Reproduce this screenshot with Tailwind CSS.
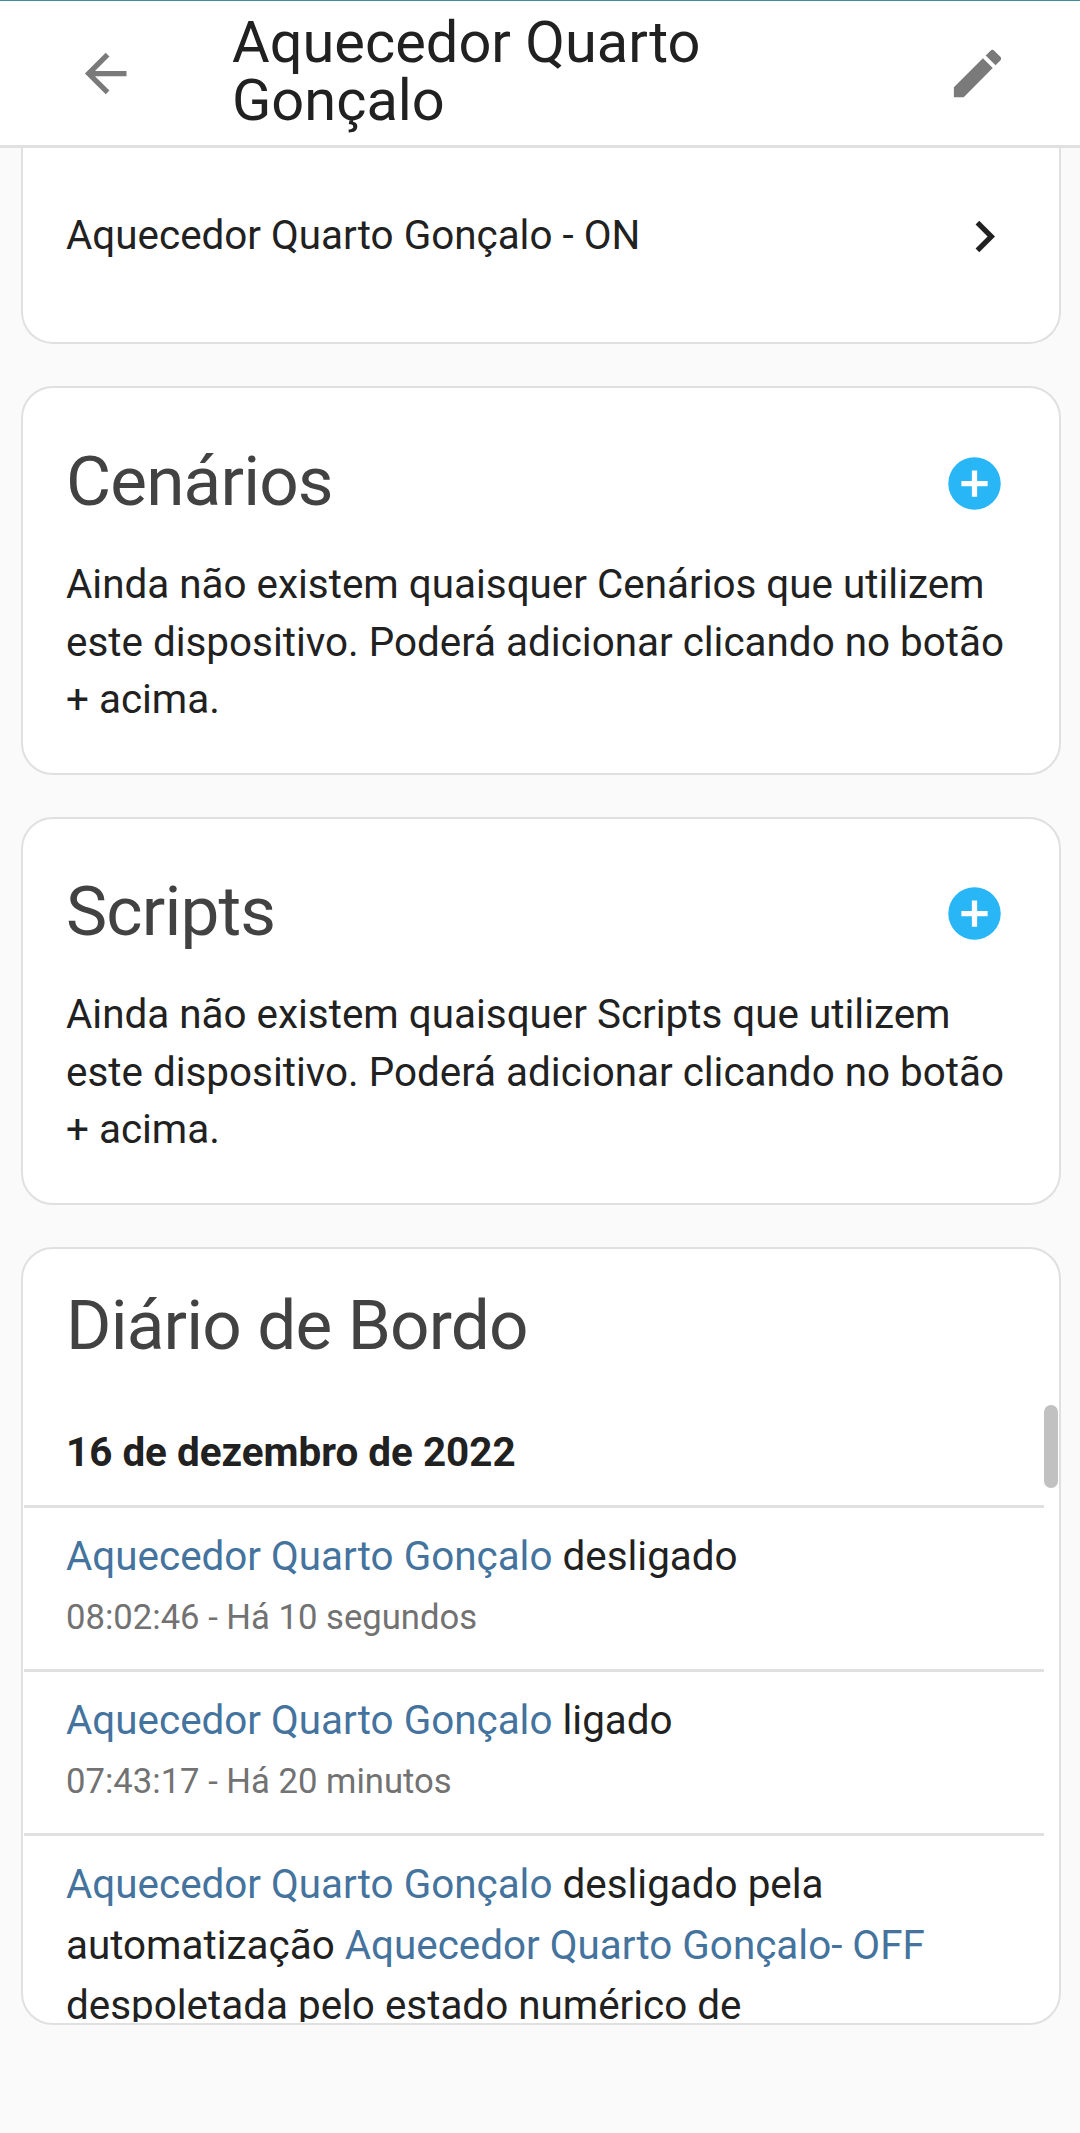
<!DOCTYPE html>
<html lang="pt">
<head>
    <meta charset="UTF-8">
    <meta name="viewport" content="width=device-width, initial-scale=1.0">
    <title>Aquecedor Quarto Gonçalo</title>
    <script src="https://cdn.jsdelivr.net/npm/@tailwindcss/browser@4"></script>
</head>
<body class="bg-[#fafafa] font-[Roboto,'Liberation_Sans',sans-serif] text-[40.4px] leading-[57.6px] text-[#212121] overflow-hidden">
<header class="h-[148px] flex items-start bg-white border-t border-t-[#3f8c9c] border-b-3 border-b-[#e0e0e0] pl-[74px] pr-[71px]">
    <svg class="size-[63px] mt-[41px] shrink-0 fill-[#7a7a7a]" viewBox="0 0 24 24"><path d="M20 11v2H8l5.5 5.5-1.42 1.42L4.16 12l7.92-7.92L13.5 5.5 8 11h12z"/></svg>
    <h1 class="w-[600px] ml-[95px] mt-[12px] text-[57.75px] leading-[58px]">Aquecedor Quarto Gonçalo</h1>
    <svg class="size-[63px] mt-[41px] ml-auto shrink-0 fill-[#7a7a7a]" viewBox="0 0 24 24"><path d="M20.71 7.04c.39-.39.39-1.04 0-1.41l-2.34-2.34c-.37-.39-1.02-.39-1.41 0l-1.84 1.83 3.75 3.75M3 17.25V21h3.75L17.81 9.93l-3.75-3.75L3 17.25z"/></svg>
</header>
<main class="ml-[21px] w-[1040px]">
    <section class="h-[196px] bg-white border-2 border-t-0 border-[#e0e0e0] rounded-b-[32px] pl-[43px] pr-[43px]">
        <a class="flex items-center justify-between h-[176px]">
            <span>Aquecedor Quarto Gonçalo - ON</span>
            <svg class="size-[63px] shrink-0 fill-[#212121]" viewBox="0 0 24 24"><path d="M8.59 16.58 13.17 12 8.59 7.41 10 6l6 6-6 6-1.41-1.42z"/></svg>
        </a>
    </section>

    <section class="h-[389px] mt-[42px] bg-white border-2 border-[#e0e0e0] rounded-[32px] pt-[52px] pl-[43px] pr-[30px]">
        <div class="flex items-center justify-between h-[84px] pr-[23px]">
            <h2 class="text-[69.3px] leading-[84px] tracking-[-0.012em] text-[#424242]">Cenários</h2>
            <svg class="size-[63px] mt-[2px] fill-[#29b6f6]" viewBox="0 0 24 24"><path d="M17 13h-4v4h-2v-4H7v-2h4V7h2v4h4m-5-9A10 10 0 0 0 2 12a10 10 0 0 0 10 10 10 10 0 0 0 10-10A10 10 0 0 0 12 2z"/></svg>
        </div>
        <p class="mt-[32px]">Ainda não existem quaisquer Cenários que utilizem<br>este dispositivo. Poderá adicionar clicando no botão<br>+ acima.</p>
    </section>

    <section class="h-[388px] mt-[42px] bg-white border-2 border-[#e0e0e0] rounded-[32px] pt-[51px] pl-[43px] pr-[30px]">
        <div class="flex items-center justify-between h-[84px] pr-[23px]">
            <h2 class="text-[69.3px] leading-[84px] tracking-[-0.012em] text-[#424242]">Scripts</h2>
            <svg class="size-[63px] mt-[2px] fill-[#29b6f6]" viewBox="0 0 24 24"><path d="M17 13h-4v4h-2v-4H7v-2h4V7h2v4h4m-5-9A10 10 0 0 0 2 12a10 10 0 0 0 10 10 10 10 0 0 0 10-10A10 10 0 0 0 12 2z"/></svg>
        </div>
        <p class="mt-[32px]">Ainda não existem quaisquer Scripts que utilizem<br>este dispositivo. Poderá adicionar clicando no botão<br>+ acima.</p>
    </section>

    <section class="relative h-[778px] mt-[42px] bg-white border-2 border-[#e0e0e0] rounded-[32px] pt-[35px]">
        <h2 class="pl-[43px] text-[69.3px] leading-[84px] tracking-[-0.012em] text-[#424242]">Diário de Bordo</h2>
        <div class="h-[654px] ml-px mr-[15px] overflow-hidden leading-[60.5px]">
            <h3 class="h-[137px] pt-[55px] pl-[42px] font-bold">16 de dezembro de 2022</h3>
            <div class="h-[164px] border-t-3 border-[#e0e0e0] pt-[19px] pl-[42px]">
                <div><a class="text-[#44739e]">Aquecedor Quarto Gonçalo</a> desligado</div>
                <div class="mt-[3px] text-[34.65px] leading-[52px] text-[#727272]">08:02:46 - Há 10 segundos</div>
            </div>
            <div class="h-[164px] border-t-3 border-[#e0e0e0] pt-[19px] pl-[42px]">
                <div><a class="text-[#44739e]">Aquecedor Quarto Gonçalo</a> ligado</div>
                <div class="mt-[3px] text-[34.65px] leading-[52px] text-[#727272]">07:43:17 - Há 20 minutos</div>
            </div>
            <div class="border-t-3 border-[#e0e0e0] pt-[19px] pl-[42px]">
                <a class="text-[#44739e]">Aquecedor Quarto Gonçalo</a> desligado pela<br>automatização <a class="text-[#44739e]">Aquecedor Quarto Gonçalo- OFF</a><br>despoletada pelo estado numérico de
            </div>
        </div>
        <div class="absolute top-[156px] right-px w-[14px] h-[83px] rounded-full bg-[#c1c1c1]"></div>
    </section>
</main>
</body>
</html>
